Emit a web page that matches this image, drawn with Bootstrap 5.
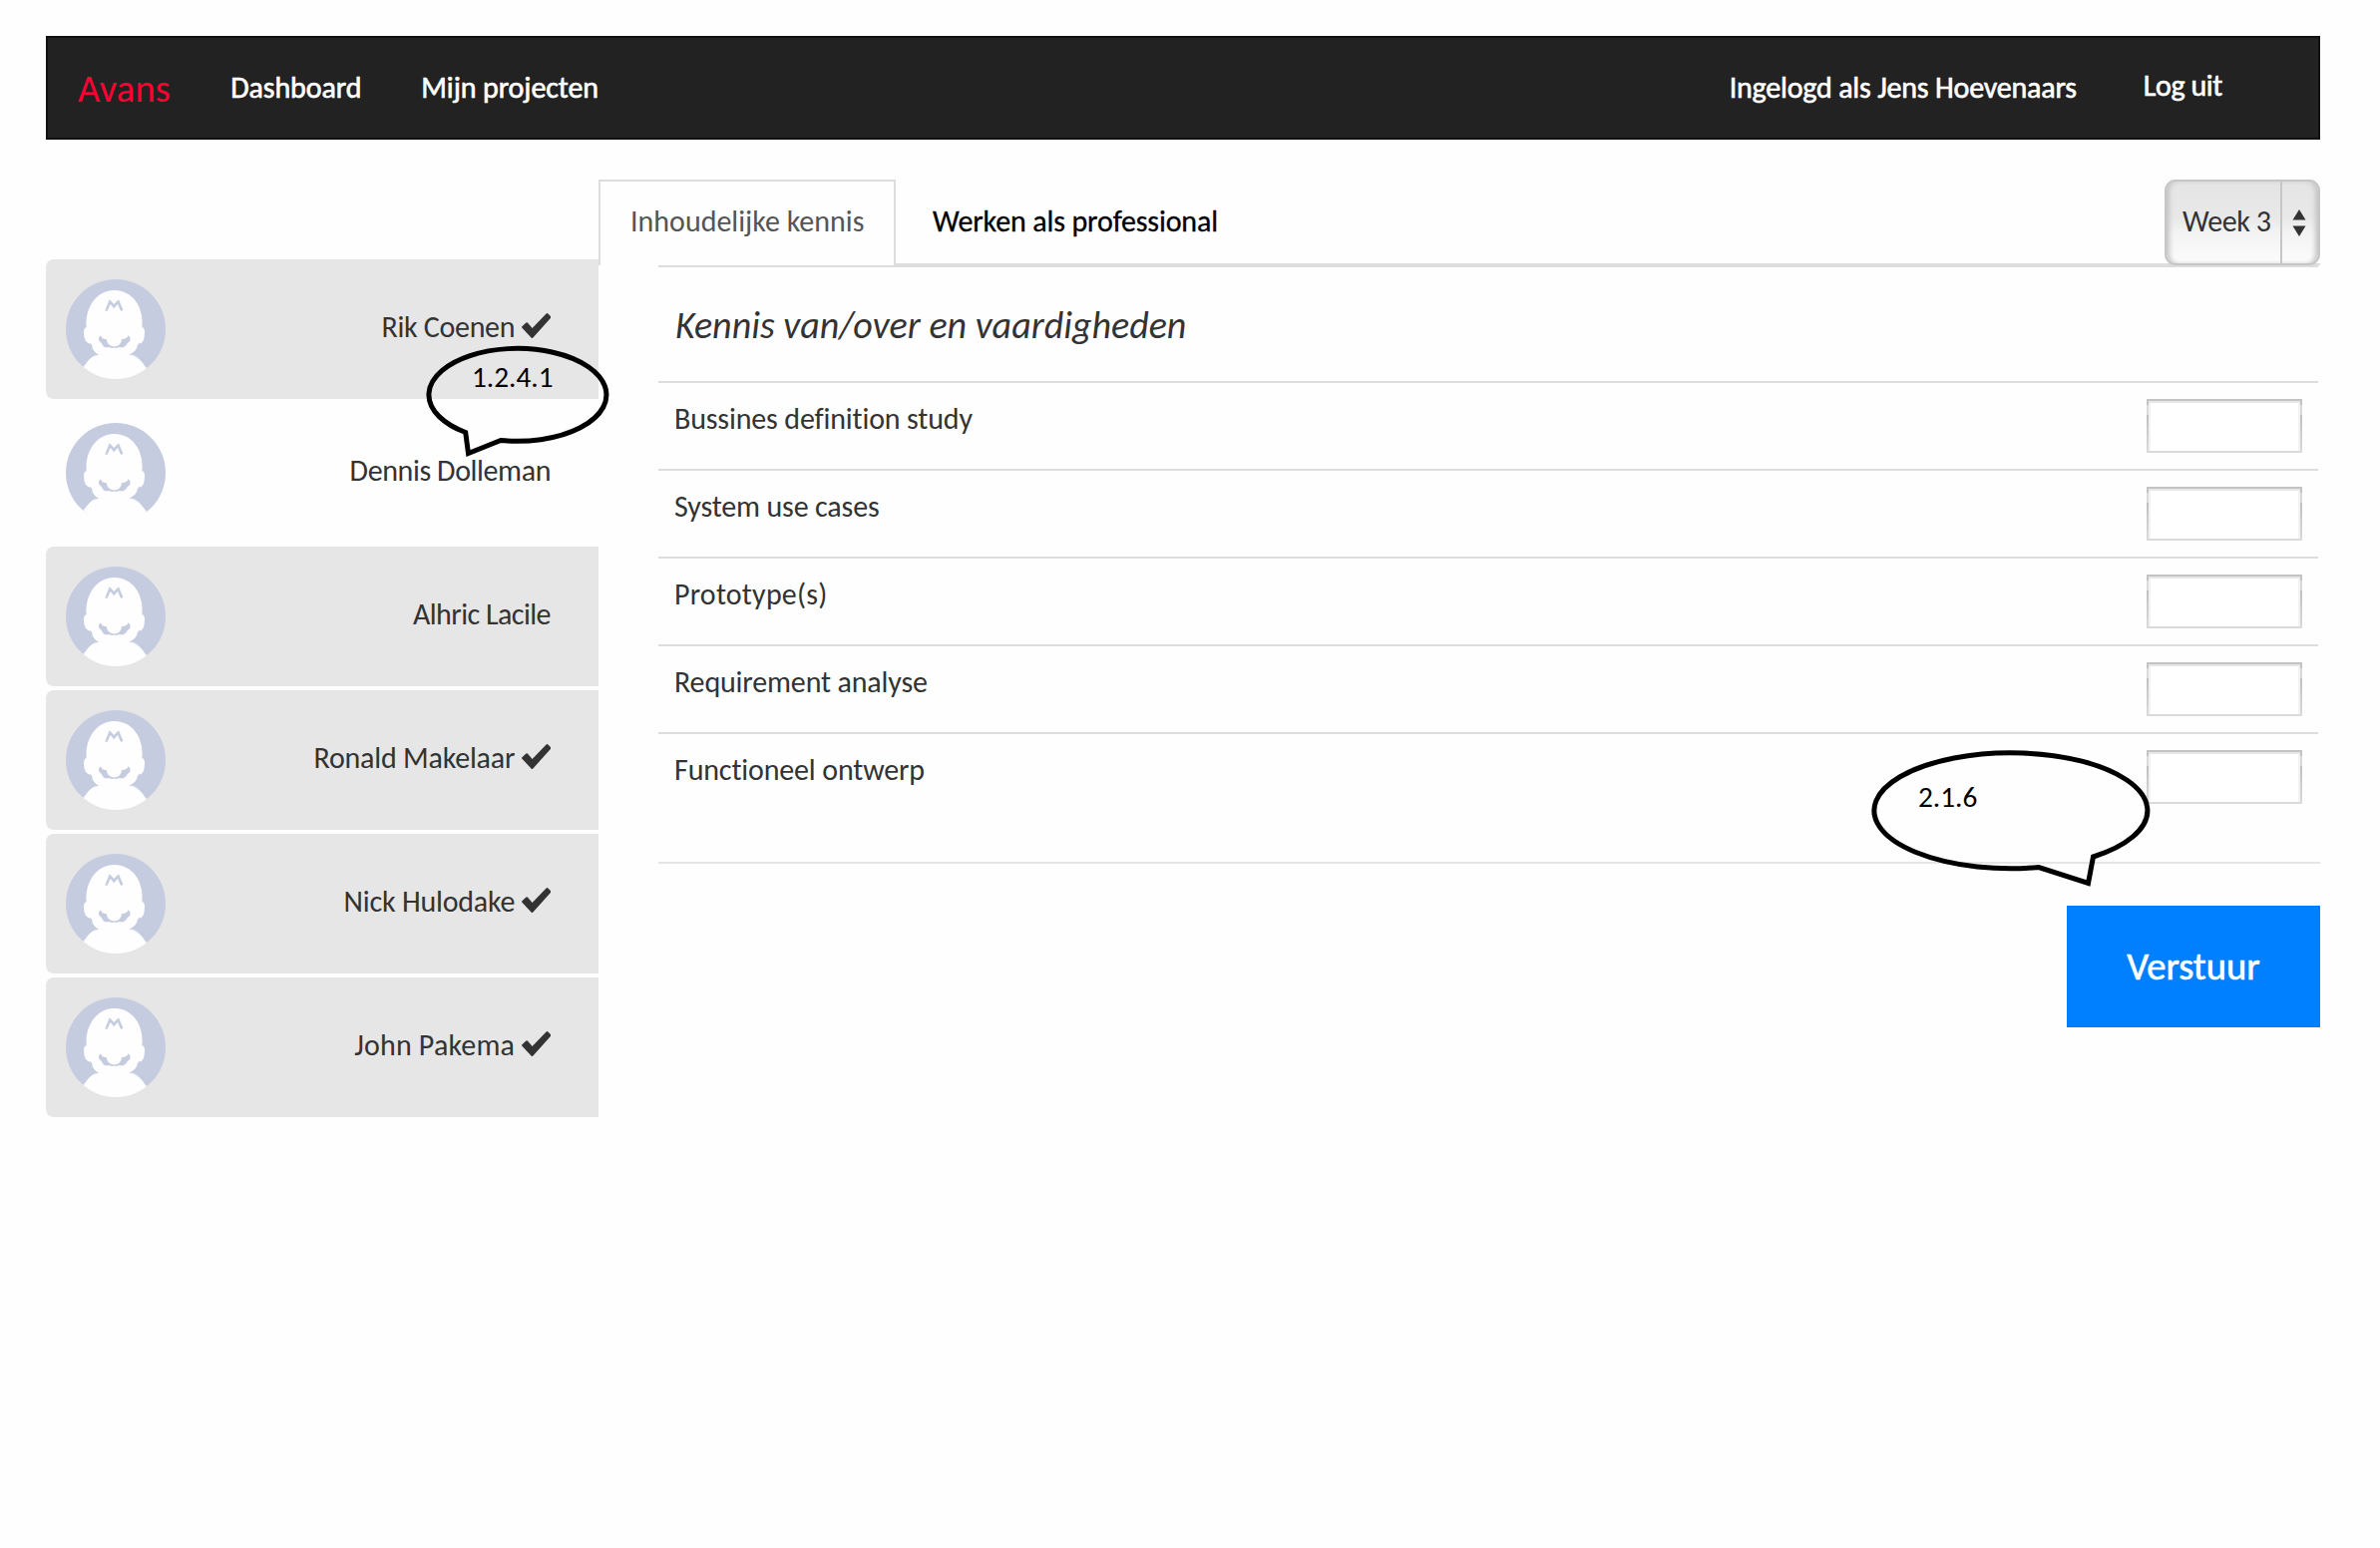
<!DOCTYPE html>
<html lang="nl">
<head>
<meta charset="utf-8">
<meta name="viewport" content="width=device-width, initial-scale=1">
<title>Avans - Beoordeling</title>
<link href="https://cdn.jsdelivr.net/npm/bootstrap@5.3.0/dist/css/bootstrap.min.css" rel="stylesheet">
<style>
body{background:#fefefe;color:#333;font-family:Calibri,Carlito,Lato,sans-serif;font-size:30px;line-height:43px;font-variant-ligatures:none}
.page{padding:36px 60px 0 46px}
.topbar{height:104px;background:#222;border:2px solid #111;padding:0 0 0 30px}
.topbar .navbar-brand{color:#f03;font-size:38.5px;line-height:98px;padding:2px 0 0;margin:0 52px 0 0;letter-spacing:.2px}
.topbar .nav-link,.topbar .navbar-text{color:#fff;line-height:100px;padding:0;-webkit-text-stroke:.6px #fff;letter-spacing:-.1px}
.topbar .navbar-text{letter-spacing:-.19px}
.topbar .nav-link.logout{line-height:96px;margin:0 88px 0 59px;letter-spacing:-.4px}
.topbar .main-nav{gap:44px}
.workspace{margin-top:40px}
.students{width:554px;margin-top:80px;gap:4px}
.student{height:140px;background:#e6e6e6;border-radius:8px 0 0 8px;padding:0 48px 0 20px}
.student.current{background:transparent}
.student span{padding-bottom:5px}
.student:nth-child(1) span{letter-spacing:-.3px}
.student:nth-child(2) span{letter-spacing:-.4px}
.student:nth-child(3) span{letter-spacing:-.55px}
.student:nth-child(4) span{letter-spacing:-.2px}
.student:nth-child(5) span{letter-spacing:-.2px}
.student:nth-child(6) span{letter-spacing:.2px}
.avatar{width:100px;height:100px}
.student .tick{width:29.3px;height:25px;margin:-7px 0 0 6.5px}
.tabbar{height:86px;border-bottom:2px solid #ddd}
.tabbar .nav-tabs{border:0}
.tabbar .nav-link{height:86px;line-height:80px;border-radius:0;border:2px solid transparent;border-bottom:0;padding:0;color:#000;-webkit-text-stroke:.3px #000;margin:0;white-space:nowrap}
.tabbar .nav-link.active{background:#fefefe;color:#555;border-color:#ddd;-webkit-text-stroke:0;width:298px;padding-left:30px}
.tabbar .nav-link.other{padding-left:35px;letter-spacing:-.13px}
.week{width:156px;height:86px;border-radius:11px;border:2px solid #c6c6c6;background:linear-gradient(#e4e4e4,#e9e9e9 45%,#f3f3f3 62%,#fcfcfc);box-shadow:inset 5px 0 5px -2px #c4c4c4,inset -5px 0 5px -2px #c4c4c4}
.week .value{width:116px;border-right:2px solid #c6c6c6;line-height:80px;padding:0 0 0 16px;white-space:nowrap;letter-spacing:-.4px}
.week .spin{width:34px}
.grades{margin:0 2px 0 60px}
.grade-row{border-top:2px solid #ddd;height:88px;padding:16px 16px 0 16px}
.grade-row label{margin-top:-2px;letter-spacing:-.15px}
.grade-row label[for=s3]{letter-spacing:.2px}
.grade-row.title{height:116px;font-size:38px;font-style:italic;padding:0 0 0 17px;line-height:116px}
.grade-row.last{height:130px}
.score{width:156px;height:54px;border:0;border-radius:0;padding:0 10px;background:
 linear-gradient(#c3c3c3,#c3c3c3) 0 0/100% 2px no-repeat,
 linear-gradient(#dadada,#dadada) 0 100%/100% 2px no-repeat,
 linear-gradient(#c3c3c3 6px,#dadada 6px,#dadada 16px,#c0c0c0 16px,#dadada) 0 0/2px 100% no-repeat,
 linear-gradient(#c3c3c3 6px,#dadada 6px,#dadada 16px,#c0c0c0 16px,#dadada) 100% 0/2px 100% no-repeat,
 linear-gradient(#e6e6e6,#e6e6e6) 0 2px/100% 2px no-repeat,
 linear-gradient(#f2f2f2,#f2f2f2) 0 0/4px 100% no-repeat,
 linear-gradient(#f2f2f2,#f2f2f2) 100% 0/4px 100% no-repeat,#fff}
.divider{height:2px;background:#e5e5e5;margin-left:60px}
.send{width:254px;height:122px;margin-top:42px;background:#0080ff;border:0;border-radius:0;color:#fff;font-size:38.6px;line-height:121px;padding:0 0 1px;-webkit-text-stroke:.6px #fff}
.note{position:absolute;color:#000;font-size:29.3px;line-height:36px}
.note svg{position:absolute;left:0;top:0;fill:none;stroke:#000;stroke-width:5}
.note span{position:absolute;white-space:nowrap}
.note-a{left:425px;top:344px}
.note-a span{left:48px;top:16px}
.note-b{left:1874px;top:749px}
.note-b span{left:49px;top:32px}
</style>
</head>
<body>
<svg width="0" height="0" class="position-absolute">
<defs>
<clipPath id="round"><circle cx="150" cy="150" r="150"/></clipPath>
<symbol id="avatar" viewBox="0 0 300 300">
<g clip-path="url(#round)">
<rect width="300" height="272" fill="#c6cce0"/>
<path fill="#fefefe" d="M62 145C57 84 93 33 146 33C200 33 236 84 229 145C239 146 238 160 236 172C235 186 229 194 217 194C214 209 207 219 190 227C212 226 224 242 243 267V300H52V265C68 242 80 226 101 228C88 222 79 211 78 195C66 193 57 187 55 172C54 158 53 146 62 145Z"/>
<path fill="#c6cce0" d="M104 169C108 178 114 181 122 180C124 193 132 202 146 202C160 202 167 192 168 180C177 181 184 178 188 169C196 176 195 185 190 189C184 191 183 199 176 203C168 207 158 203 154 206Q149 209 145 205Q141 209 136 206C130 203 122 207 114 203C110 199 109 193 104 189C97 184 97 178 104 169Z"/>
<path fill="#c6cce0" d="M118 94L131 61L145 75L159 61L172 92L165 96L156 74L145 88L134 75L124 97Z"/>
</g>
</symbol>
<symbol id="tick" viewBox="0 0 29.3 25">
<path fill="#333" d="M.4 13.2L4.4 9.6Q5.3 9 6.1 9.8L10.6 14.9L24.6.5Q25.5-.4 26.4.5L28.9 3Q29.7 4 28.9 5L11.4 24.4Q10.4 25.4 9.5 24.4L.4 14.7Q-.3 13.9.4 13.2Z"/>
</symbol>
</defs>
</svg>

<div class="page position-relative">
<nav class="topbar navbar navbar-expand d-flex align-items-start">
<a class="navbar-brand" href="#">Avans</a>
<div class="navbar-nav main-nav">
<a class="nav-link" href="#">Dashboard</a>
<a class="nav-link" href="#">Mijn projecten</a>
</div>
<div class="navbar-nav ms-auto">
<span class="navbar-text">Ingelogd als Jens Hoevenaars</span>
<a class="nav-link logout" href="#">Log uit</a>
</div>
</nav>

<div class="workspace d-flex align-items-start">
<aside class="students d-flex flex-column flex-shrink-0">
<div class="student d-flex align-items-center"><svg class="avatar me-auto"><use href="#avatar"/></svg><span>Rik Coenen</span><svg class="tick"><use href="#tick"/></svg></div>
<div class="student current d-flex align-items-center"><svg class="avatar me-auto"><use href="#avatar"/></svg><span>Dennis Dolleman</span></div>
<div class="student d-flex align-items-center"><svg class="avatar me-auto"><use href="#avatar"/></svg><span>Alhric Lacile</span></div>
<div class="student d-flex align-items-center"><svg class="avatar me-auto"><use href="#avatar"/></svg><span>Ronald Makelaar</span><svg class="tick"><use href="#tick"/></svg></div>
<div class="student d-flex align-items-center"><svg class="avatar me-auto"><use href="#avatar"/></svg><span>Nick Hulodake</span><svg class="tick"><use href="#tick"/></svg></div>
<div class="student d-flex align-items-center"><svg class="avatar me-auto"><use href="#avatar"/></svg><span>John Pakema</span><svg class="tick"><use href="#tick"/></svg></div>
</aside>

<main class="flex-grow-1">
<div class="tabbar d-flex justify-content-between">
<div class="nav nav-tabs flex-nowrap">
<a class="nav-link active" href="#">Inhoudelijke kennis</a>
<a class="nav-link other" href="#">Werken als professional</a>
</div>
<div class="week d-flex flex-shrink-0">
<div class="value">Week 3</div>
<div class="spin d-flex align-items-center justify-content-center"><svg width="14" height="27" viewBox="0 0 14 27" fill="#333"><path d="M7 0L13.5 10.5H.5ZM7 27L.5 16.5H13.5Z"/></svg></div>
</div>
</div>

<div class="grades">
<div class="grade-row title">Kennis van/over en vaardigheden</div>
<div class="grade-row d-flex justify-content-between align-items-start"><label for="s1">Bussines definition study</label><input id="s1" class="score" type="text"></div>
<div class="grade-row d-flex justify-content-between align-items-start"><label for="s2">System use cases</label><input id="s2" class="score" type="text"></div>
<div class="grade-row d-flex justify-content-between align-items-start"><label for="s3">Prototype(s)</label><input id="s3" class="score" type="text"></div>
<div class="grade-row d-flex justify-content-between align-items-start"><label for="s4">Requirement analyse</label><input id="s4" class="score" type="text"></div>
<div class="grade-row last d-flex justify-content-between align-items-start"><label for="s5">Functioneel ontwerp</label><input id="s5" class="score" type="text"></div>
</div>
<div class="divider"></div>
<div class="d-flex justify-content-end"><button class="btn send" type="button">Verstuur</button></div>
</main>
</div>

<div class="note note-a">
<svg width="190" height="116" viewBox="424 344 190 116"><path d="M465.7 433.5A89 46.5 0 1 1 501 441.500L468.500 454.500Z"/></svg>
<span>1.2.4.1</span>
</div>
<div class="note note-b">
<svg width="290" height="144" viewBox="1874 749 290 144"><path d="M2098.500 859A137 58 0 1 0 2044 869.500L2093.500 885.500Z"/></svg>
<span>2.1.6</span>
</div>
</div>
<script src="https://cdn.jsdelivr.net/npm/bootstrap@5.3.0/dist/js/bootstrap.bundle.min.js"></script>
</body>
</html>
